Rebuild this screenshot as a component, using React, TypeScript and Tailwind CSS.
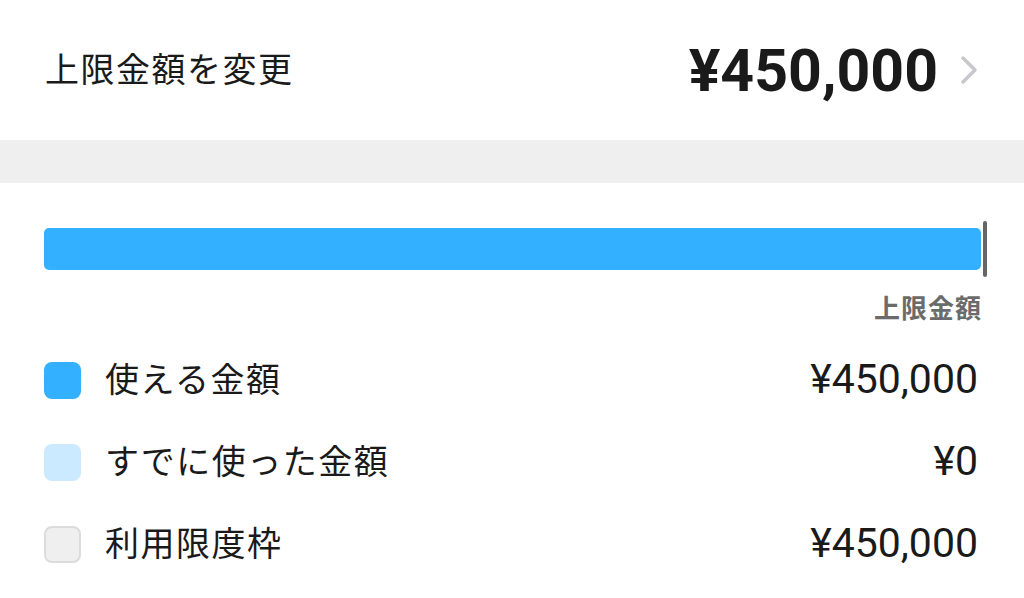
import React from "react";

const font = { fontFamily: '"Roboto", "Noto Sans CJK JP", sans-serif' };

function Row({ color, border, label, value }: { color: string; border?: boolean; label: string; value: string }) {
  return (
    <div className="flex h-[82px] items-center pr-[46px]">
      <div
        className={`h-[37px] w-[37px] rounded-[8px] ${color} ${border ? "border-2 border-[#dcdcdc]" : ""}`}
      />
      <div className="ml-[24px] text-[34px] text-[#1a1a1a] tracking-[1.5px]">{label}</div>
      <div className="ml-auto text-[41px] text-[#1a1a1a]">{value}</div>
    </div>
  );
}

export default function App() {
  return (
    <div className="w-[1024px] h-[598px] overflow-hidden bg-white" style={font}>
      <div className="flex h-[140px] items-center pl-[45px] pr-[46px]">
        <div className="text-[34px] text-[#1a1a1a] tracking-[1.5px]">上限金額を変更</div>
        <div className="ml-auto text-[59px] font-bold text-[#1a1a1a] leading-none">¥450,000</div>
        <svg className="ml-[22px]" width="18" height="30" viewBox="0 0 18 30">
          <path d="M3 3 L15 15 L3 27" fill="none" stroke="#c7c7cc" strokeWidth="3.5" strokeLinecap="round" strokeLinejoin="round" />
        </svg>
      </div>
      <div className="h-[43px] bg-[#efefef]" />
      <div className="pl-[44px]">
        <div className="mt-[38px] flex items-center pr-[37px]">
          <div className="h-[42px] flex-1 rounded-[5px] bg-[#33b0ff]" />
          <div className="ml-[2px] h-[56px] w-[4px] rounded-full bg-[#666666]" />
        </div>
        <div className="mt-[15px] flex justify-end pr-[42px]">
          <div className="text-[26px] font-bold text-[#6b6b6b] leading-[34px] tracking-[1px]">上限金額</div>
        </div>
        <div className="mt-[13px]">
          <Row color="bg-[#33b0ff]" label="使える金額" value="¥450,000" />
          <Row color="bg-[#cbeaff]" label="すでに使った金額" value="¥0" />
          <Row color="bg-[#efefef]" border label="利用限度枠" value="¥450,000" />
        </div>
      </div>
    </div>
  );
}
